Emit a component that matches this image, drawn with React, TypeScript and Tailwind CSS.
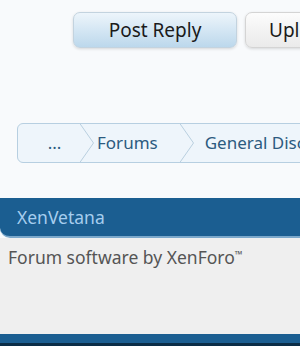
export default function App() {
  const font = { fontFamily: '"Noto Sans", "Open Sans", Arial, sans-serif' };
  return (
    <div className="w-[300px] h-[346px] overflow-hidden flex flex-col bg-[#f8fafc]" style={font}>
      <div className="flex gap-2 pl-[73px] pt-[12px] shrink-0">
        <div className="shrink-0 w-[164px] h-[36px] rounded-[7px] border border-[#c3d3df] bg-gradient-to-b from-[#edf5fb] to-[#bcd8ec] shadow-[0_1px_3px_rgba(0,0,0,0.14)] flex items-center justify-center text-[19px] text-[#1a1a1a]">
          Post Reply
        </div>
        <div className="shrink-0 h-[36px] px-[23px] rounded-[7px] border border-[#d4d4d4] bg-gradient-to-b from-[#fcfcfc] to-[#eaeaea] shadow-[0_1px_3px_rgba(0,0,0,0.14)] flex items-center text-[19px] text-[#1a1a1a] whitespace-nowrap">
          Upload File
        </div>
      </div>

      <div className="shrink-0 mt-[75px] ml-[17px] h-[40px] w-[400px] flex items-center rounded-[6px] border border-[#b7cfe1] bg-[#eef5fb] text-[17px] text-[#2c5b80] whitespace-nowrap">
        <span className="w-[61px] pl-[12px] text-center">...</span>
        <svg width="16" height="40" viewBox="0 0 16 40" className="shrink-0 -my-px">
          <polyline points="0.5,0 14.5,20 0.5,40" fill="none" stroke="#b9cfdf" strokeWidth="1" />
        </svg>
        <span className="ml-[2px]">Forums</span>
        <svg width="19" height="40" viewBox="0 0 19 40" className="shrink-0 ml-[21px] -my-px">
          <polyline points="0.5,0 14.5,20 0.5,40" fill="none" stroke="#b9cfdf" strokeWidth="1" />
        </svg>
        <span className="ml-[7px]">General Discussion</span>
      </div>

      <div className="shrink-0 mt-[35px] h-[40px] bg-[#1b5e91] rounded-bl-[10px] border-b-2 border-[#7ba8cb] flex items-center pl-[17px] text-[17.5px] text-[#a6cdee]">
        XenVetana
      </div>

      <div className="flex-1 bg-[#efefef] pl-[8px] pt-[6px] text-[17.5px] text-[#555]">
        Forum software by XenForo<sup className="text-[10px] -top-[6px]">™</sup>
      </div>

      <div className="shrink-0 h-[9px] bg-[#1b5e91]" />
      <div className="shrink-0 h-[3px] bg-[#0b2d47]" />
    </div>
  );
}
